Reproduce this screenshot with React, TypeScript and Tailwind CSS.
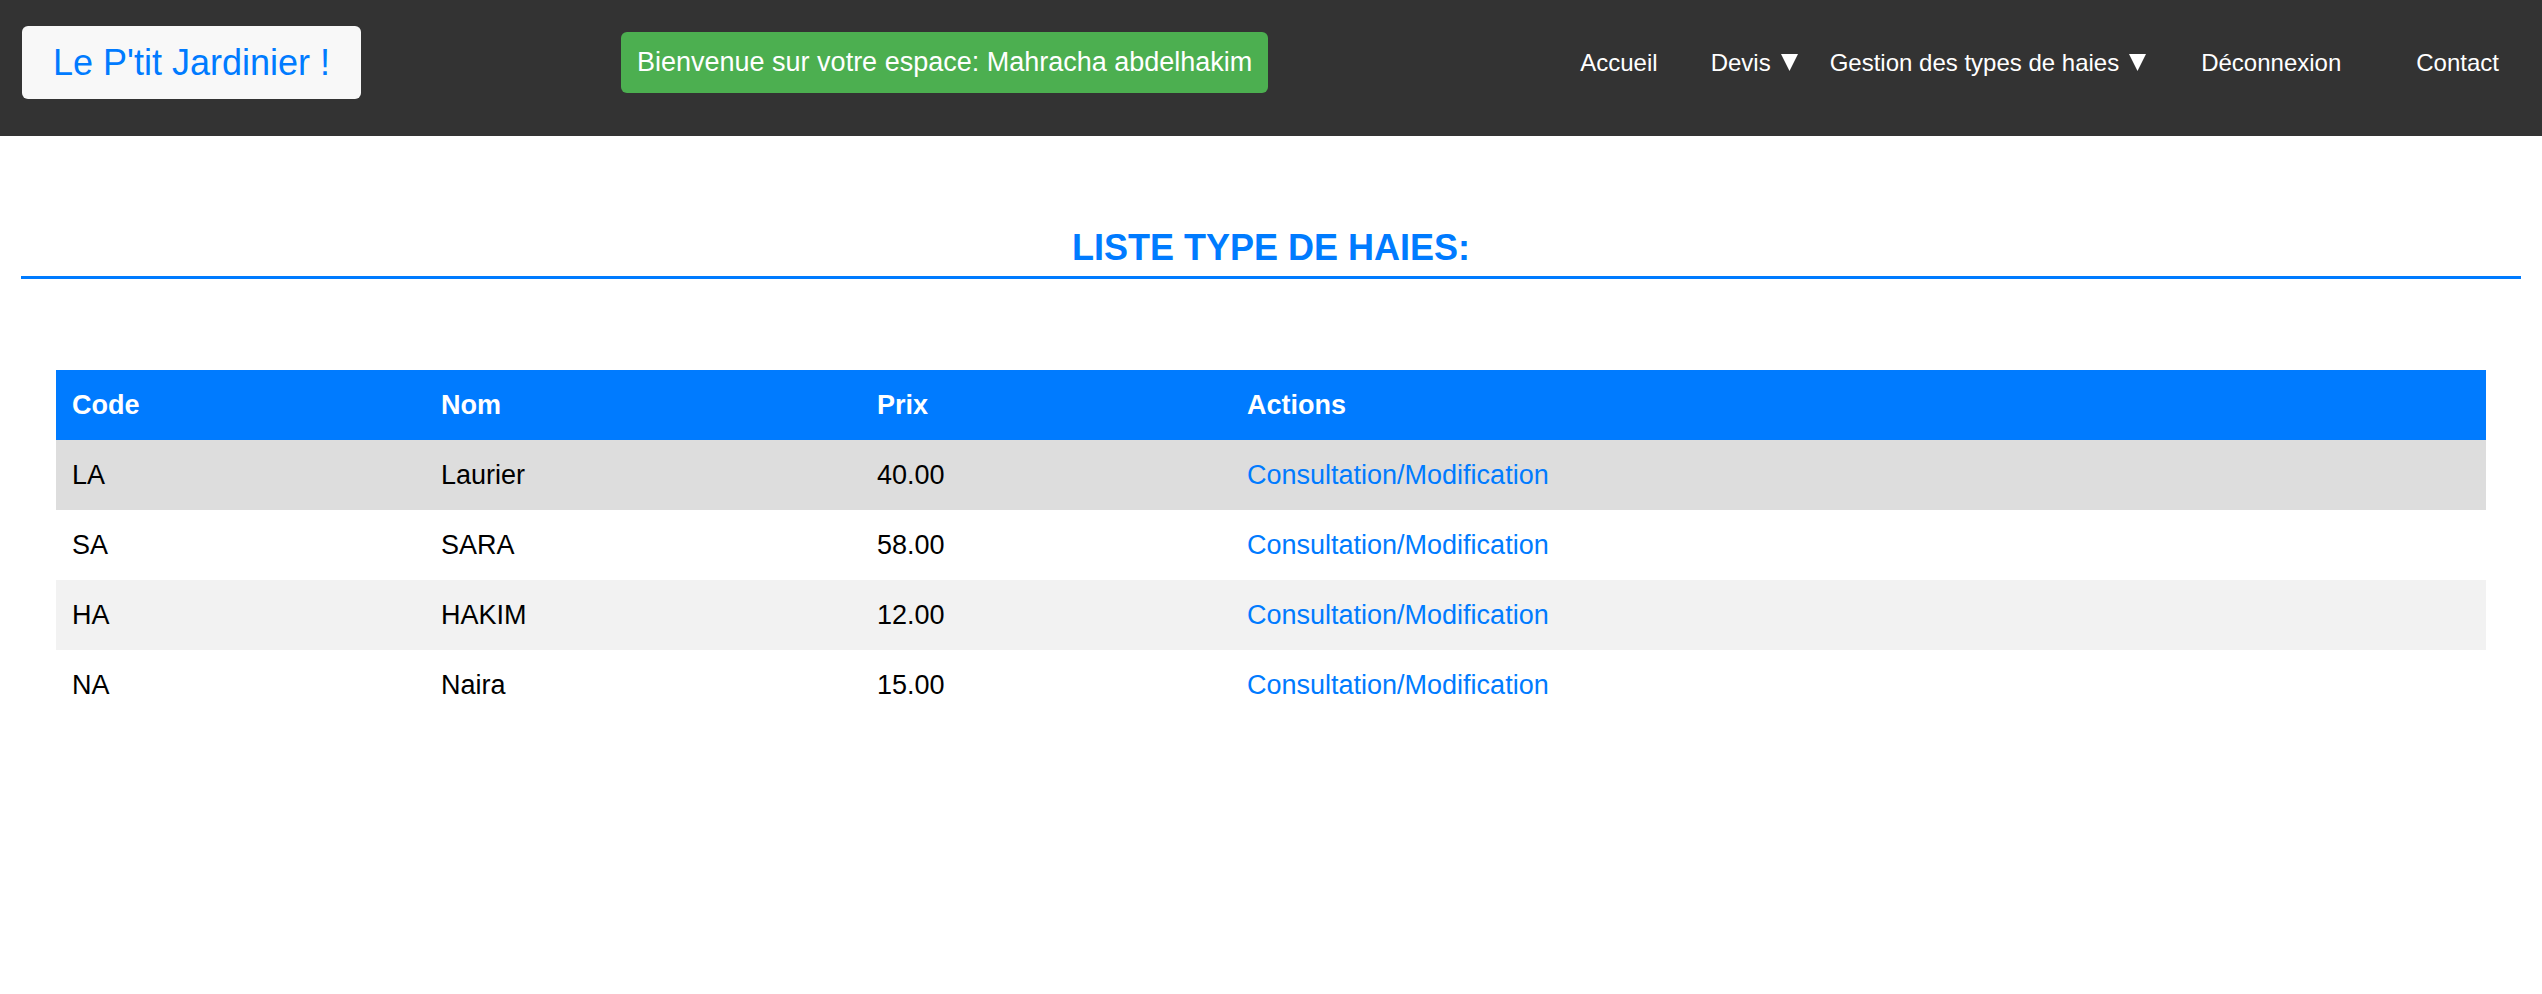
import React from 'react';

const Caret = () => (
  <svg className="ml-[10px] h-[17px] w-[17px]" viewBox="0 0 17 17" fill="currentColor">
    <polygon points="0,0 17,0 8.5,17" />
  </svg>
);

const NavBar = () => {
  return (
    <header className="flex items-center bg-[#333333] pl-[22px] pr-[43px] pt-[26px] pb-[37px]">
      <div className="rounded-[6px] bg-[#f8f8f8] px-[31px] py-[16px] text-[36px] leading-[41px] text-[#007bff]">
        Le P'tit Jardinier !
      </div>

      <div className="ml-[260px] rounded-[6px] bg-[#4caf50] px-[16px] py-[15px] text-[27px] leading-[31px] text-white">
        Bienvenue sur votre espace: Mahracha abdelhakim
      </div>

      <nav className="ml-auto flex items-center text-[24px] leading-[28px] text-white">
        <a href="#">Accueil</a>
        <a href="#" className="ml-[53px] inline-flex items-center">
          Devis
          <Caret />
        </a>
        <a href="#" className="ml-[32px] inline-flex items-center">
          Gestion des types de haies
          <Caret />
        </a>
        <a href="#" className="ml-[55px]">Déconnexion</a>
        <a href="#" className="ml-[75px]">Contact</a>
      </nav>
    </header>
  );
};

const App = () => {
  const haies = [
    { code: "LA", nom: "Laurier", prix: "40.00" },
    { code: "SA", nom: "SARA", prix: "58.00" },
    { code: "HA", nom: "HAKIM", prix: "12.00" },
    { code: "NA", nom: "Naira", prix: "15.00" }
  ];

  const rowColors = ["bg-[#dddddd]", "bg-white", "bg-[#f2f2f2]", "bg-white"];

  return (
    <div className="min-h-screen bg-white font-['Liberation_Sans',Arial,sans-serif]">
      <NavBar />

      <main className="px-[21px] pt-[92px]">
        <h2 className="border-b-[3px] border-[#007bff] pb-[8px] text-center text-[36px] font-bold leading-[40px] text-[#007bff]">
          LISTE TYPE DE HAIES:
        </h2>

        <div className="mt-[91px] px-[35px]">
          <table className="w-full table-fixed border-collapse text-left text-[27px] leading-[31px]">
            <thead>
              <tr className="h-[70px] bg-[#007bff] text-white">
                <th className="w-[369px] px-[16px] font-bold">Code</th>
                <th className="w-[436px] px-[16px] font-bold">Nom</th>
                <th className="w-[370px] px-[16px] font-bold">Prix</th>
                <th className="px-[16px] font-bold">Actions</th>
              </tr>
            </thead>
            <tbody>
              {haies.map((haie, index) => (
                <tr key={haie.code} className={`h-[70px] text-black ${rowColors[index]}`}>
                  <td className="px-[16px]">{haie.code}</td>
                  <td className="px-[16px]">{haie.nom}</td>
                  <td className="px-[16px]">{haie.prix}</td>
                  <td className="px-[16px]">
                    <a href="#" className="text-[#007bff]">Consultation/Modification</a>
                  </td>
                </tr>
              ))}
            </tbody>
          </table>
        </div>
      </main>
    </div>
  );
};

export default App;
